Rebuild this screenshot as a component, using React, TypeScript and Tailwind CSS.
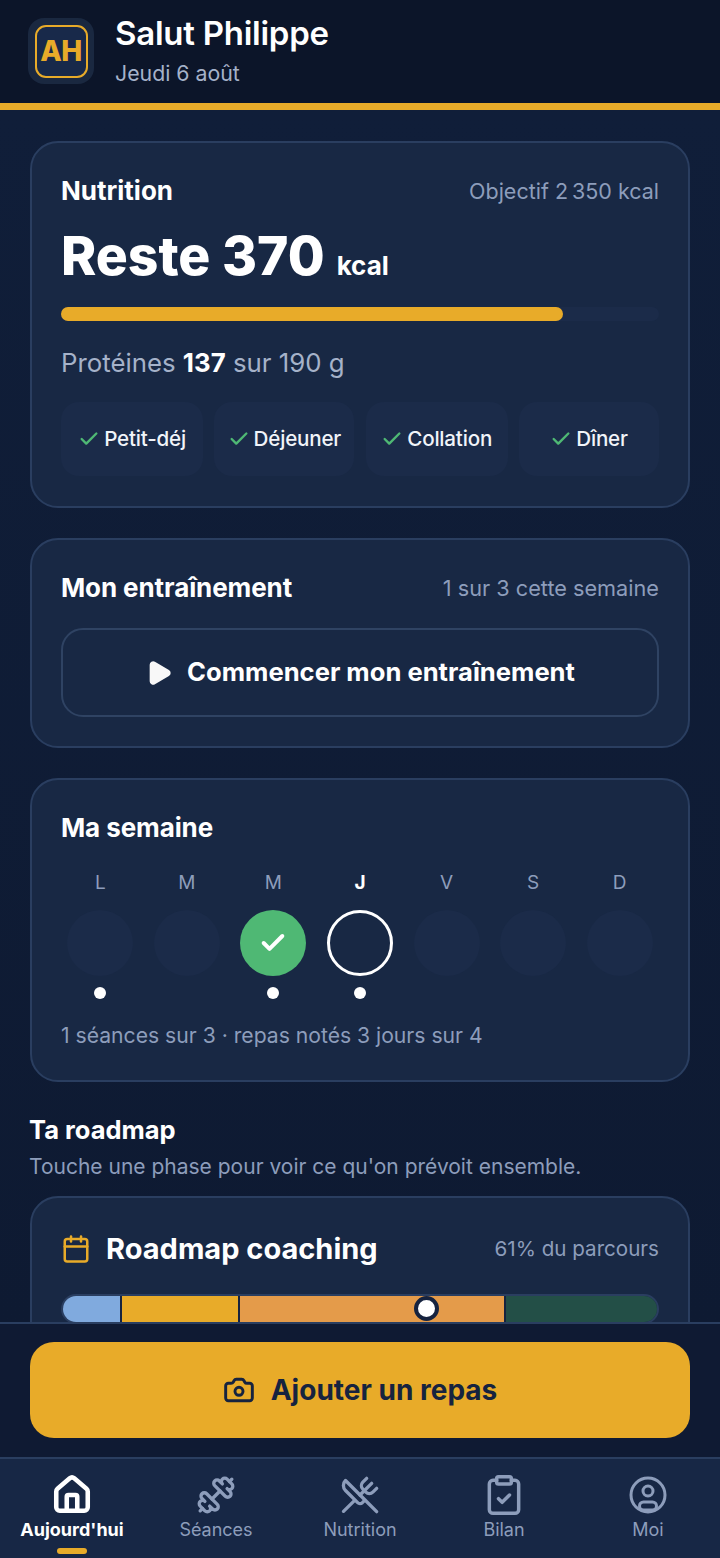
import React from "react";
import { Calendar, Camera, Check, ClipboardCheck, Dumbbell, House, Play, UtensilsCrossed } from "lucide-react";

const meals = [
  { label: "Petit-déj", w: "w-[142px]" },
  { label: "Déjeuner", w: "w-[140px]" },
  { label: "Collation", w: "w-[142px]" },
  { label: "Dîner", w: "w-[140px]" },
];

const days = [
  { l: "L", dot: true },
  { l: "M", dot: false },
  { l: "M", dot: true, done: true },
  { l: "J", dot: true, today: true },
  { l: "V", dot: false },
  { l: "S", dot: false },
  { l: "D", dot: false },
];

const cardClass = "rounded-[28px] border-2 border-[#2a3e60] bg-[#182844]";

function MealChip({ label, w }: { label: string; w: string }) {
  return (
    <div className={`${w} flex h-[74px] items-center justify-center gap-[4px] rounded-[18px] bg-[#1b2b49]`}>
      <Check size={22} strokeWidth={2.6} className="text-[#4fb874]" />
      <span className="text-[20.6px] font-medium tracking-[-0.2px] text-[#f1f4f9]">{label}</span>
    </div>
  );
}

function NavItem({ icon, label, active }: { icon: React.ReactNode; label: string; active?: boolean }) {
  return (
    <div className={`flex w-[144px] flex-col items-center pt-[16px] ${active ? "text-white" : "text-[#8d9dbb]"}`}>
      <div className="flex h-[40px] w-[44px] items-center justify-center">{icon}</div>
      <span className={`mt-[3px] text-[18px] leading-[24px] ${active ? "font-bold" : "font-normal"}`}>{label}</span>
      {active && <span className="mt-[6px] h-[6px] w-[30px] rounded-full bg-[#e8ab29]" />}
    </div>
  );
}

function ProfileIcon() {
  return (
    <svg width="38" height="38" viewBox="0 0 38 38" fill="none" stroke="currentColor" strokeWidth="3">
      <circle cx="19" cy="19" r="17" />
      <circle cx="19" cy="15" r="5" />
      <rect x="10.5" y="26" width="17" height="8" rx="4" />
    </svg>
  );
}

export default function App() {
  return (
    <div className="flex h-[1558px] w-[720px] flex-col overflow-hidden bg-[#0f1a33] font-['Inter',sans-serif] text-white">
      <header className="flex h-[103px] shrink-0 items-start gap-[21px] bg-[#0c1529] pl-[28px] pt-[17px]">
        <div className="mt-[1px] flex h-[66px] w-[66px] items-center justify-center rounded-[16px] bg-[#1a2840]">
          <div className="flex h-[53px] w-[53px] items-center justify-center rounded-[11px] border-2 border-[#e8ab29] bg-[#18294a]">
            <span className="text-[28px] font-extrabold leading-none tracking-[-0.5px] text-[#e8ab29]">AH</span>
          </div>
        </div>
        <div className="flex flex-col">
          <span className="text-[33px] font-semibold leading-[32px] tracking-[-0.25px]">Salut Philippe</span>
          <span className="mt-[11px] text-[21.3px] leading-[26px] text-[#a5b2c9]">Jeudi 6 août</span>
        </div>
      </header>
      <div className="h-[7px] shrink-0 bg-[#e8ab29]" />

      <main className="min-h-0 flex-1 overflow-hidden bg-gradient-to-b from-[#101e39] to-[#0e1a32] px-[30px] pt-[31px]">
        <section className={`${cardClass} h-[367px] px-[29px] pt-[31px]`}>
          <div className="flex h-[34px] items-center justify-between">
            <span className="text-[26px] font-bold leading-[34px]">Nutrition</span>
            <span className="text-[21.5px] leading-[36px] text-[#8d9dbb]">Objectif 2{"\u202f"}350 kcal</span>
          </div>
          <div className="mt-[15px] flex items-baseline gap-[12px]">
            <span className="text-[53.4px] font-extrabold leading-[66px]">Reste 370</span>
            <span className="text-[26px] font-bold">kcal</span>
          </div>
          <div className="mt-[18px] h-[14px] w-full rounded-full bg-[#1b2b49]">
            <div className="h-full w-[502px] rounded-full bg-[#e8ab29]" />
          </div>
          <p className="mt-[26px] text-[25.8px] leading-[32px] text-[#a5b2c9]">
            Protéines <span className="font-bold text-white">137</span> sur 190 g
          </p>
          <div className="mt-[23px] flex justify-between">
            {meals.map((m) => (
              <MealChip key={m.label} label={m.label} w={m.w} />
            ))}
          </div>
        </section>

        <section className={`${cardClass} mt-[30px] h-[210px] px-[29px] pt-[31px]`}>
          <div className="flex items-center justify-between">
            <span className="text-[26px] font-bold leading-[34px] tracking-[-0.1px]">Mon entraînement</span>
            <span className="text-[21.7px] leading-[34px] text-[#8d9dbb]">1 sur 3 cette semaine</span>
          </div>
          <div className="mt-[23px] flex h-[89px] items-center justify-center gap-[14px] rounded-[22px] border-2 border-[#2f4363]">
            <Play size={28} fill="currentColor" strokeWidth={2} className="text-[#f8f8f8]" />
            <span className="text-[25.6px] font-bold">Commencer mon entraînement</span>
          </div>
        </section>

        <section className={`${cardClass} mt-[30px] h-[304px] px-[29px] pt-[31px]`}>
          <span className="block text-[26px] font-bold leading-[34px] tracking-[-0.1px]">Ma semaine</span>
          <div className="-mx-[4px] mt-[26px] grid grid-cols-7">
            {days.map((d, i) => (
              <div key={i} className="flex flex-col items-center">
                <span className={`text-[19px] leading-[24px] ${d.today ? "font-bold text-white" : "text-[#8d9dbb]"}`}>{d.l}</span>
                {d.done ? (
                  <div className="mt-[15px] flex h-[66px] w-[66px] items-center justify-center rounded-full bg-[#4fb874]">
                    <Check size={28} strokeWidth={3.4} className="text-white" />
                  </div>
                ) : d.today ? (
                  <div className="mt-[15px] h-[66px] w-[66px] rounded-full border-[3px] border-white" />
                ) : (
                  <div className="mt-[15px] h-[66px] w-[66px] rounded-full bg-[#1b2b49]" />
                )}
                <div className={`mt-[11px] h-[12px] w-[12px] rounded-full ${d.dot ? "bg-white" : "bg-transparent"}`} />
              </div>
            ))}
          </div>
          <p className="mt-[23px] text-[21.15px] leading-[28px] text-[#8d9dbb]">1 séances sur 3 · repas notés 3 jours sur 4</p>
        </section>

        <h2 className="-ml-[1px] mt-[32px] text-[25.5px] font-bold leading-[32px]">Ta roadmap</h2>
        <p className="-ml-[1px] mt-[6px] pt-[1px] text-[21px] leading-[28px] text-[#8d9dbb]">Touche une phase pour voir ce qu'on prévoit ensemble.</p>

        <section className={`${cardClass} mt-[15px] h-[300px] px-[29px] pt-[31px]`}>
          <div className="flex h-[40px] items-center justify-between">
            <div className="flex items-center gap-[15px]">
              <Calendar size={30} strokeWidth={2} className="text-[#e8ab29]" />
              <span className="text-[29px] font-bold leading-[40px]">Roadmap coaching</span>
            </div>
            <span className="pt-[1px] text-[20.6px] text-[#8d9dbb]">61% du parcours</span>
          </div>
          <div className="relative mt-[25px] flex h-[30px] overflow-hidden rounded-full border-2 border-[#2a3e60]">
            <div className="w-[59px] border-r-2 border-[#16233f] bg-[#80aade]" />
            <div className="w-[118px] border-r-2 border-[#16233f] bg-[#e8ab29]" />
            <div className="w-[266px] border-r-2 border-[#16233f] bg-[#e49b4a]" />
            <div className="flex-1 bg-[#234f47]" />
          </div>
          <div className="relative">
            <div className="absolute left-[353px] top-[-28px] h-[25px] w-[25px] rounded-full border-[4px] border-[#16233f] bg-white" />
          </div>
        </section>
      </main>

      <div className="h-[135px] shrink-0 border-t-2 border-[#2a3e60] bg-[#0f1a33] px-[30px] pt-[18px]">
        <div className="flex h-[96px] items-center justify-center gap-[16px] rounded-[24px] bg-[#e8ab29] text-[#16233f]">
          <Camera size={32} strokeWidth={2.2} />
          <span className="text-[28px] font-bold">Ajouter un repas</span>
        </div>
      </div>

      <nav className="flex h-[101px] shrink-0 border-t-2 border-[#2a3e60] bg-[#172745]">
        <NavItem active label="Aujourd'hui" icon={<House size={42} strokeWidth={2.6} />} />
        <NavItem label="Séances" icon={<Dumbbell size={40} strokeWidth={2} />} />
        <NavItem label="Nutrition" icon={<UtensilsCrossed size={40} strokeWidth={2} />} />
        <NavItem label="Bilan" icon={<ClipboardCheck size={44} strokeWidth={1.9} />} />
        <NavItem label="Moi" icon={<ProfileIcon />} />
      </nav>
    </div>
  );
}
